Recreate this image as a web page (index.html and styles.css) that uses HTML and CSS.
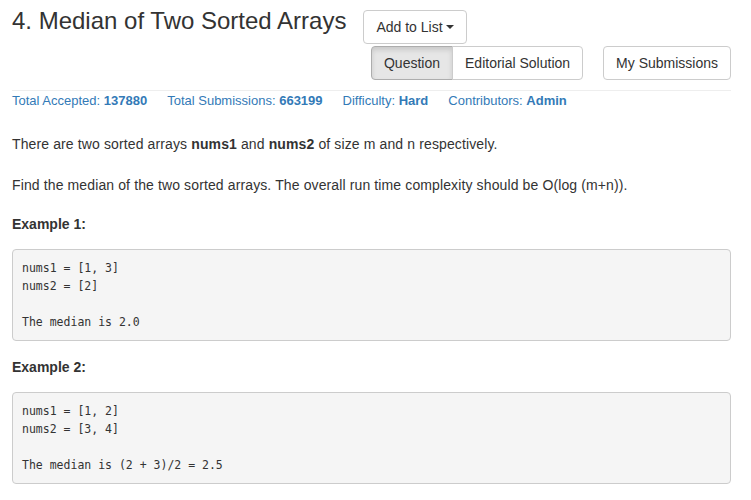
FILE: index.html
```html
<!DOCTYPE html>
<html>
<head>
<meta charset="utf-8">
<link rel="stylesheet" href="styles.css">
</head>
<body>
<div class="page">
  <div class="title-row">
    <h1 class="title">4. Median of Two Sorted Arrays</h1>
    <button class="btn add-btn">Add to List <span class="caret"></span></button>
  </div>
  <div class="tabs-row">
    <div class="btn-group">
      <button class="btn active">Question</button><button class="btn">Editorial Solution</button>
    </div>
    <button class="btn">My Submissions</button>
  </div>
  <hr class="rule">
  <div class="stats">
    <span class="stat">Total Accepted: <b>137880</b></span>
    <span class="stat">Total Submissions: <b>663199</b></span>
    <span class="stat">Difficulty: <b>Hard</b></span>
    <span class="stat">Contributors: <b>Admin</b></span>
  </div>
  <div class="question">
    <p class="p1">There are two sorted arrays <b>nums1</b> and <b>nums2</b> of size m and n respectively.</p>
    <p class="p2">Find the median of the two sorted arrays. The overall run time complexity should be O(log (m+n)).</p>
    <p class="ex"><b>Example 1:</b></p>
    <pre class="code">nums1 = [1, 3]
nums2 = [2]

The median is 2.0</pre>
    <p class="ex ex2"><b>Example 2:</b></p>
    <pre class="code">nums1 = [1, 2]
nums2 = [3, 4]

The median is (2 + 3)/2 = 2.5</pre>
  </div>
</div>
</body>
</html>
```

FILE: styles.css
```css
* { box-sizing: border-box; }
html, body { margin: 0; padding: 0; background: #fff; }
body {
  font-family: "Liberation Sans", Arial, sans-serif;
  font-size: 14px;
  line-height: 20px;
  color: #333;
}
.page {
  width: 719px;
  margin-left: 12px;
}
.title-row {
  display: flex;
  align-items: flex-start;
}
.title {
  margin: 7px 0 0 0;
  font-size: 24px;
  line-height: 28px;
  font-weight: 500;
  color: #333;
}
.btn {
  display: inline-block;
  font-family: "Liberation Sans", Arial, sans-serif;
  font-size: 14px;
  line-height: 20px;
  padding: 6px 12px;
  border: 1px solid #ccc;
  border-radius: 4px;
  background: #fff;
  color: #333;
  margin: 0;
  cursor: pointer;
}
.add-btn {
  margin: 10px 0 0 17px;
}
.caret {
  display: inline-block;
  width: 0;
  height: 0;
  vertical-align: middle;
  border-top: 4px solid #333;
  border-left: 4px solid transparent;
  border-right: 4px solid transparent;
  position: relative;
  top: -1px;
}
.tabs-row {
  display: flex;
  justify-content: flex-end;
  gap: 20px;
  margin-top: 2px;
}
.btn-group {
  display: flex;
}
.btn-group .btn:first-child {
  border-top-right-radius: 0;
  border-bottom-right-radius: 0;
}
.btn-group .btn:last-child {
  border-top-left-radius: 0;
  border-bottom-left-radius: 0;
  margin-left: -1px;
}
.btn.active {
  background: #e6e6e6;
  border-color: #adadad;
  box-shadow: inset 0 3px 5px rgba(0,0,0,.125);
}
.rule {
  border: 0;
  border-top: 1px solid #eee;
  margin: 10px 0 0 0;
}
.stats {
  display: flex;
  gap: 20px;
  font-size: 13px;
  line-height: 17px;
  margin-top: 1px;
  color: #337ab7;
}
.stats b { font-weight: bold; }
.question p { margin: 0; letter-spacing: 0.12px; }
.p1 { margin-top: 25px !important; }
.p2 { margin-top: 21px !important; }
.ex { margin-top: 19px !important; letter-spacing: 0 !important; }
.ex2 { margin-top: 16px !important; }
.code {
  margin: 15px 0 0 0;
  padding: 9px;
  background: #f5f5f5;
  border: 1px solid #ccc;
  border-radius: 4px;
  font-family: "DejaVu Sans Mono", Consolas, monospace;
  font-size: 11.5px;
  line-height: 18px;
  color: #333;
}
```
